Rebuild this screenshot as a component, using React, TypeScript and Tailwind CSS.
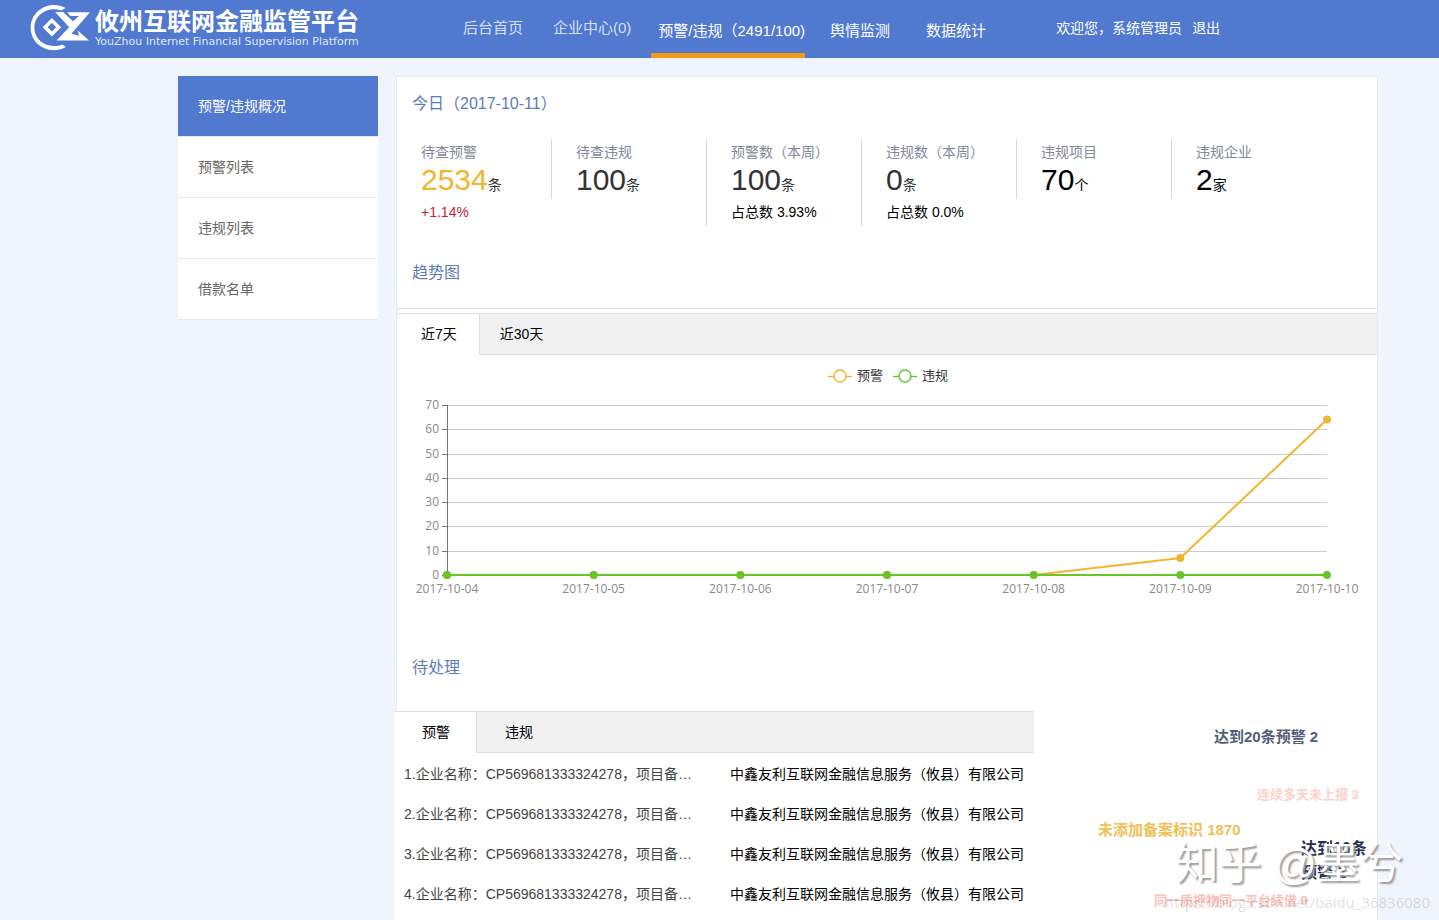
import { useState } from "react";
import clsx from "clsx";

type Stat = {
    label: string;
    value: string;
    unit: string;
    color: string;
    note?: string;
    noteColor?: string;
};

const stats: Stat[] = [
    { label: "待查预警", value: "2534", unit: "条", color: "text-[#f0b62f]", note: "+1.14%", noteColor: "text-[#c81e32]" },
    { label: "待查违规", value: "100", unit: "条", color: "text-[#333333]" },
    { label: "预警数（本周）", value: "100", unit: "条", color: "text-[#333333]", note: "占总数 3.93%", noteColor: "text-black" },
    { label: "违规数（本周）", value: "0", unit: "条", color: "text-[#333333]", note: "占总数 0.0%", noteColor: "text-black" },
    { label: "违规项目", value: "70", unit: "个", color: "text-black" },
    { label: "违规企业", value: "2", unit: "家", color: "text-black" },
];

const sideItems = ["预警/违规概况", "预警列表", "违规列表", "借款名单"];

const days = ["2017-10-04", "2017-10-05", "2017-10-06", "2017-10-07", "2017-10-08", "2017-10-09", "2017-10-10"];
const warnings = [0, 0, 0, 0, 0, 7, 64];
const violations = [0, 0, 0, 0, 0, 0, 0];

const pending = [1, 2, 3, 4].map((id) => ({
    id,
    title: "企业名称：CP569681333324278，项目备案标识未添加",
    company: "中鑫友利互联网金融信息服务（攸县）有限公司",
}));

function Logo() {
    return (
        <a href="#" className="flex items-start gap-1 pt-1 pl-[30px] text-white">
            <svg viewBox="28 10 184 142" className="h-[47px] w-[61px] shrink-0" fill="currentColor">
                <path d="M136 22 C88 -4 30 28 30 82 C30 136 88 166 136 140 L126 132 C86 148 41 124 41 82 C41 40 86 16 122 30 Z" />
                <path d="M94 52 L122 80 L94 108 L66 80 Z M94 67 L81 80 L94 93 L107 80 Z" fillRule="evenodd" />
                <path d="M104 34 L128 34 L158 62 L176 46 L150 46 L140 35 L209 35 L153 100 L176 106 L172 90 L206 120 L108 120 L146 80 Z" />
            </svg>
            <span className="flex flex-col">
                <span className="text-[24px] leading-9 font-bold whitespace-nowrap">攸州互联网金融监管平台</span>
                <span className="-mt-1 font-['DejaVu_Sans'] text-[11px] leading-3 whitespace-nowrap text-[#dfe8fb]">
                    YouZhou Internet Financial Supervision Platform
                </span>
            </span>
        </a>
    );
}

function Header() {
    return (
        <header className="flex h-[58px] bg-[#5179d0] text-[15px] whitespace-nowrap text-white">
            <div className="w-[463px] shrink-0">
                <Logo />
            </div>
            <nav className="flex">
                <div className="flex items-center gap-[30px] pr-5 pb-0.5 text-[#d5e0f7]">
                    <a href="#">后台首页</a>
                    <a href="#">企业中心(0)</a>
                </div>
                <div className="flex gap-[18px]">
                    <a href="#" className="flex items-center border-b-[5px] border-[#f59a14] pt-[10px] pl-[7px]">
                        预警/违规（2491/100)
                    </a>
                    <a href="#" className="flex items-center border-b-[5px] border-transparent pt-[10px] pr-[9px] pl-[7px]">
                        舆情监测
                    </a>
                    <a href="#" className="flex items-center border-b-[5px] border-transparent pt-[10px] pl-[9px]">
                        数据统计
                    </a>
                </div>
            </nav>
            <div className="flex items-center gap-[10px] pb-0.5 pl-[70px] text-sm">
                <span>欢迎您，系统管理员</span>
                <a href="#">退出</a>
            </div>
        </header>
    );
}

function TabBar({ tabs, active, onChange, pad }: { tabs: string[]; active: number; onChange: (i: number) => void; pad: string }) {
    return (
        <div className="flex h-[42px] border-t border-[#dedede] bg-[#f1f1f1] text-sm text-black">
            {tabs.map((tab, i) => (
                <button
                    key={tab}
                    onClick={() => onChange(i)}
                    className={clsx(
                        pad,
                        "border-b",
                        i === active ? "border-r border-r-[#dedede] border-b-white bg-white" : "border-[#dedede]"
                    )}
                >
                    {tab}
                </button>
            ))}
            <div className="flex-1 border-b border-[#dedede]" />
        </div>
    );
}

function TrendChart() {
    const x = (i: number) => 50 + (i * 880) / 6;
    const y = (v: number) => 220 - (v * 170) / 70;
    const line = (data: number[]) => data.map((v, i) => `${x(i)},${y(v)}`).join(" ");

    return (
        <svg viewBox="0 0 980 285" className="block w-full font-['Open_Sans','Noto_Sans_CJK_SC',sans-serif]">
            {/* legend */}
            <g fill="#fff" strokeWidth="1.4">
                <path d="M431 21.5h24" stroke="#f0b62f" />
                <circle cx="443" cy="21" r="6" stroke="#f0b62f" />
                <path d="M496 21.5h24" stroke="#67c52a" />
                <circle cx="508" cy="21" r="6" stroke="#67c52a" />
            </g>
            <g fontSize="13" fill="#333">
                <text x="460" y="25">预警</text>
                <text x="525" y="25">违规</text>
            </g>

            {/* grid */}
            {[0, 10, 20, 30, 40, 50, 60, 70].map((v) => (
                <g key={v}>
                    <path d={`M50 ${Math.round(y(v)) + 0.5}H930`} stroke="#ccc" />
                    <path d={`M45 ${Math.round(y(v)) + 0.5}h5`} stroke="#777" />
                    <text x="42" y={y(v) + 4} fontSize="12" textAnchor="end" fill="#888">{v}</text>
                </g>
            ))}
            <path d="M50.5 50V220" stroke="#777" />
            {days.map((d, i) => (
                <text key={d} x={x(i)} y="238" fontSize="12" textAnchor="middle" fill="#888">{d}</text>
            ))}

            <polyline points={line(warnings)} fill="none" stroke="#f0b62f" strokeWidth="2" />
            {warnings.map((v, i) => <circle key={i} cx={x(i)} cy={y(v)} r="4" fill="#f0b62f" />)}
            <polyline points={line(violations)} fill="none" stroke="#67c52a" strokeWidth="2" />
            {violations.map((v, i) => <circle key={i} cx={x(i)} cy={y(v)} r="4" fill="#67c52a" />)}
        </svg>
    );
}

function WordCloud() {
    return (
        <div className="relative min-h-[209px] flex-1 text-[15px] leading-5 font-bold whitespace-nowrap">
            <span className="absolute top-4 left-[180px] text-[#555e78]">达到20条预警 2</span>
            <span className="absolute top-[74px] left-[223px] text-[13px] text-[#fbd2ca]">连续多天未上报 3</span>
            <span className="absolute top-[109px] left-16 text-[#f0bf55]">未添加备案标识 1870</span>
            <span className="absolute top-[126px] left-[267px] text-base text-[#26304f]">
                达到10条
                <br />
                预警 2
            </span>
            <span className="absolute top-[180px] left-[120px] text-[13px] text-[#f9c4ba]">同一质押物同一平台续借 9</span>
        </div>
    );
}

export default function App() {
    const [range, setRange] = useState(0);
    const [kind, setKind] = useState(0);

    return (
        <div className="relative flex min-h-screen flex-col overflow-hidden bg-[#f0f4fc] font-['Liberation_Sans','Noto_Sans_CJK_SC',sans-serif]">
            <Header />

            <div className="flex flex-1 items-stretch gap-[18px] pt-[18px] pr-[61px] pl-[178px]">
                <aside className="w-[200px] shrink-0 text-sm text-[#666]">
                    {sideItems.map((item, i) => (
                        <a
                            key={item}
                            href="#"
                            className={clsx(
                                "flex h-[61px] items-center border-b border-[#e6e8ec] pl-5",
                                i === 0 ? "bg-[#5179d0] text-white" : "bg-white"
                            )}
                        >
                            {item}
                        </a>
                    ))}
                </aside>

                <main className="min-w-0 flex-1 border border-b-0 border-[#e3e9f4] bg-white">
                    <h2 className="mt-[15px] pl-[15px] text-base leading-6 text-[#5a7db8]">今日（2017-10-11）</h2>

                    <div className="mt-[23px] flex h-[87px] items-start">
                        {stats.map((s, i) => (
                            <div
                                key={s.label}
                                className={clsx(
                                    "pl-6 whitespace-nowrap",
                                    i === 0 ? "w-[154px]" : "w-[155px] border-l border-[#d8d8dc]"
                                )}
                            >
                                <div className="h-[60px] pt-[3px]">
                                    <div className="text-sm leading-5 text-[#83879c]">{s.label}</div>
                                    <div className={clsx("leading-9", s.color)}>
                                        <span className="text-[30px]">{s.value}</span>
                                        <span className={clsx("text-sm", i === 0 && "text-[#333]")}>{s.unit}</span>
                                    </div>
                                </div>
                                {s.note && <div className={clsx("text-sm leading-[27px]", s.noteColor)}>{s.note}</div>}
                            </div>
                        ))}
                    </div>

                    <h2 className="mt-[35px] pl-[15px] text-base leading-6 text-[#5a7db8]">趋势图</h2>
                    <div className="mt-[23px] mb-1 border-t border-[#dedede]" />
                    <TabBar tabs={["近7天", "近30天"]} active={range} onChange={setRange} pad="pr-[22px] pl-6 last-of-type:pl-5" />
                    <TrendChart />

                    <h2 className="mt-4 pl-[15px] text-base leading-6 text-[#5a7db8]">待处理</h2>
                    <div className="mt-[31px] flex">
                        <section className="-ml-[3px] w-[640px] shrink-0 bg-white">
                            <TabBar tabs={["预警", "违规"]} active={kind} onChange={setKind} pad="pr-[26px] pl-7" />
                            <ul className="pt-px text-sm">
                                {pending.map((p) => (
                                    <li key={p.id} className="flex h-10 items-center gap-[34px] pl-[10px]">
                                        <a href="#" className="w-[292px] truncate text-[#444]">{p.id}.{p.title}</a>
                                        <span className="whitespace-nowrap text-black">{p.company}</span>
                                    </li>
                                ))}
                            </ul>
                        </section>
                        <WordCloud />
                    </div>
                </main>
            </div>

            <div className="pointer-events-none absolute right-9 bottom-[26px] text-[43px] leading-[60px] whitespace-nowrap text-white [text-shadow:2px_2px_2px_#999]">
                知乎 @墨兮
            </div>
            <div className="pointer-events-none absolute right-[9px] bottom-1.5 font-['Open_Sans'] text-[15px] leading-6 whitespace-nowrap text-black/15">
                https://blog.csdn.net/baidu_36836080
            </div>
        </div>
    );
}
